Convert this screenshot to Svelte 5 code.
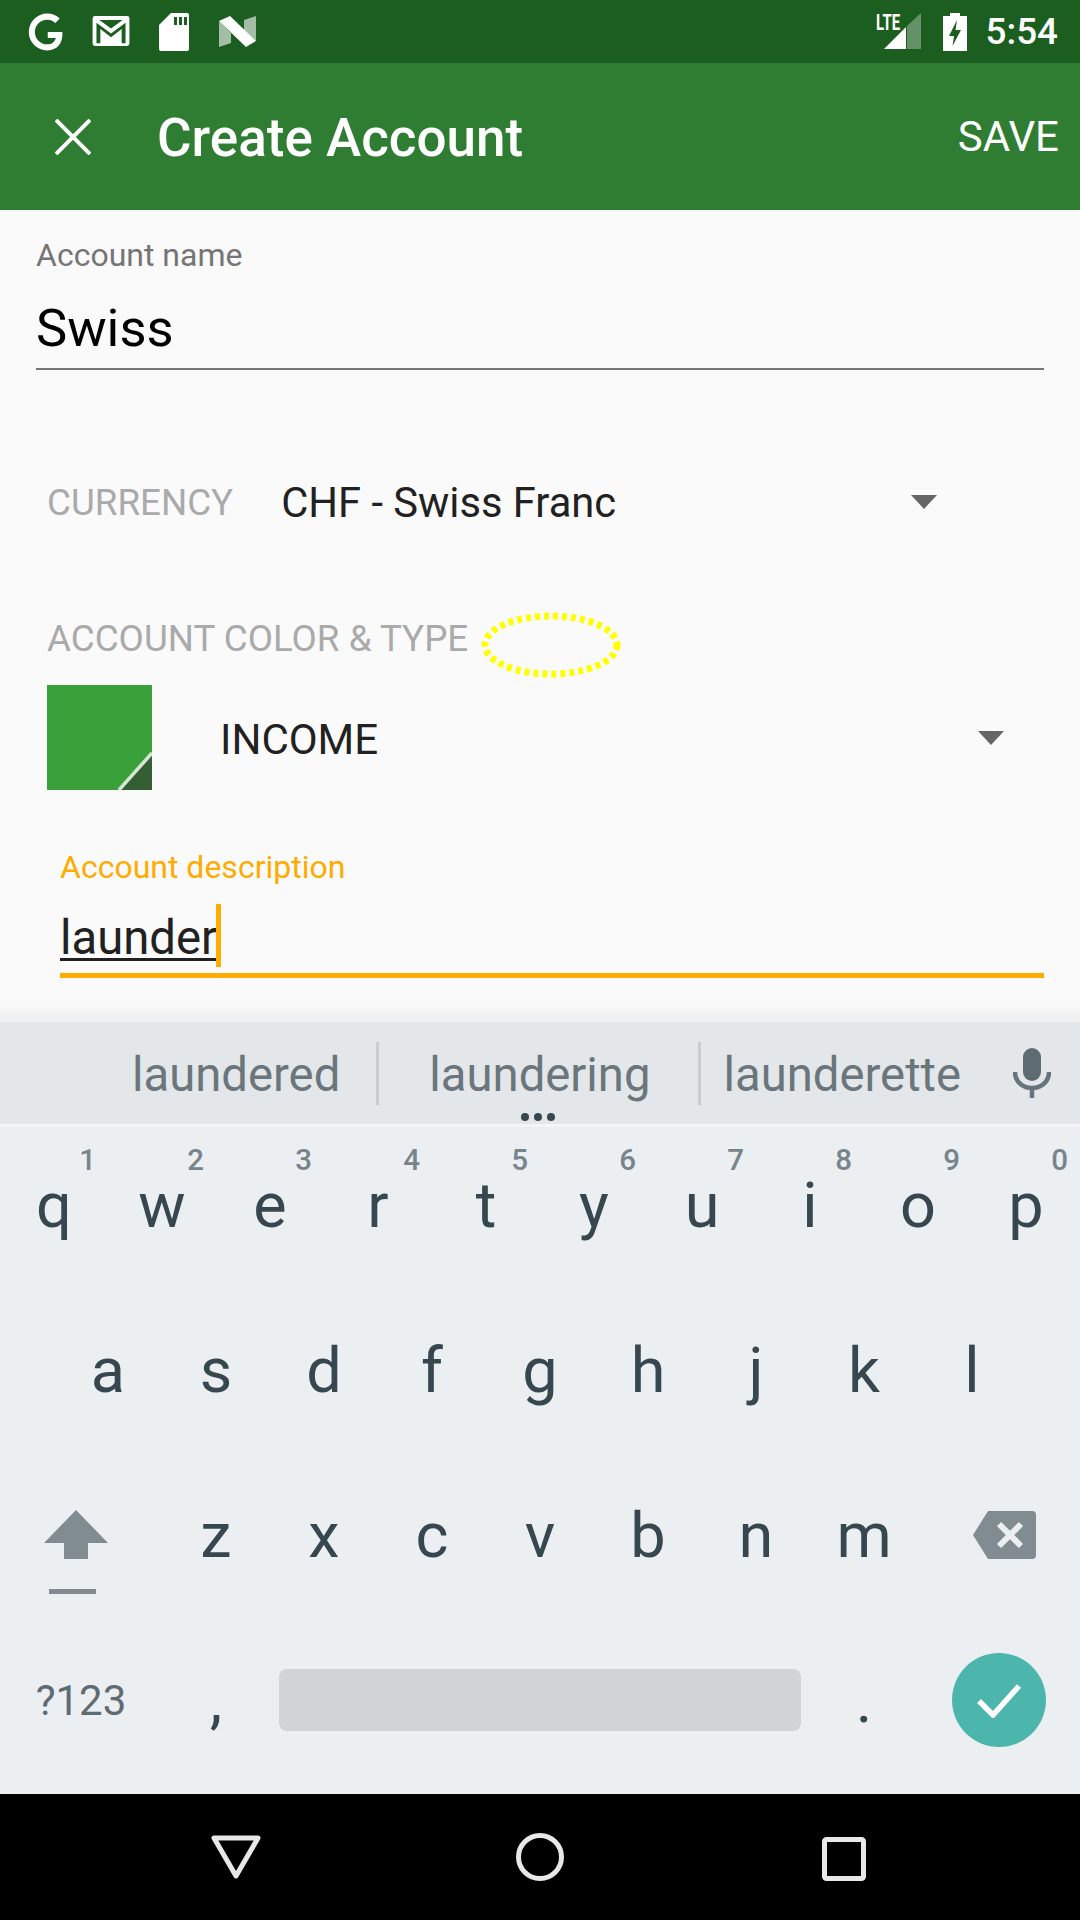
<script>
  const rows = [
    [['q','1'],['w','2'],['e','3'],['r','4'],['t','5'],['y','6'],['u','7'],['i','8'],['o','9'],['p','0']],
    [['a'],['s'],['d'],['f'],['g'],['h'],['j'],['k'],['l']]
  ];
  const row3 = ['z','x','c','v','b','n','m'];
</script>

<div class="screen">
  <header class="status">
    <div class="status-left">
      <svg class="ic-g" viewBox="0 0 40 40"><path d="M35.5 20H20.8v6.2h8.6c-1.2 4-4.6 6.800-9.200 6.800a13 13 0 0 1 0-26c3.400 0 6.400 1.300 8.600 3.400l4.600-4.600A19.400 19.400 0 0 0 20.200.6a19.400 19.400 0 1 0 0 38.800c10.800 0 16.800-7.800 16-19.400z" fill="#fff"/></svg>
      <svg class="ic-m" viewBox="0 0 38 32"><rect width="38" height="31" rx="2.500" fill="#fff"/><path d="M4 28V7l15 11L34 7v21h-4V13.500L19 22 8 13.500V28zM7 4h24L19 13z" fill="#1b5e20"/></svg>
      <svg class="ic-sd" viewBox="0 0 30 38"><path d="M12 0h16a2 2 0 0 1 2 2v34a2 2 0 0 1-2 2H2a2 2 0 0 1-2-2V12z" fill="#fff"/><path d="M15 4h3v8h-3zM20 4h3v8h-3zM25 4h3v8h-3z" fill="#1b5e20"/></svg>
      <svg class="ic-n" viewBox="0 0 37 32"><path d="M0 5v26l12-4V17z" fill="#fff" opacity=".6"/><path d="M25 4l12-4v25L25 15z" fill="#fff" opacity=".6"/><path d="M0 5 11 0l26 25-10 6z" fill="#fff"/></svg>
    </div>
    <div class="status-right">
      <div class="signal">
        <span class="lte">LTE</span>
        <svg viewBox="0 0 38 37"><path d="M0 36 22 14v22z" fill="#fff"/><path d="M23 13 37 0v36H23z" fill="#fff" opacity=".32"/></svg>
      </div>
      <svg class="ic-bat" viewBox="0 0 24 38"><path d="M7 0h10v3h7v35H0V3h7z" fill="#fff"/><path d="M14 7 6 23h5l-1.500 10L18 17h-5.500z" fill="#1b5e20"/></svg>
      <span class="time">5:54</span>
    </div>
  </header>

  <div class="appbar">
    <svg class="close" viewBox="0 0 36 36"><path d="M1 1l34 34M35 1 1 35" stroke="#fff" stroke-width="4" fill="none"/></svg>
    <h1>Create Account</h1>
    <span class="save">SAVE</span>
  </div>

  <main class="form">
    <div class="field first">
      <label for="n">Account name</label>
      <div class="value" id="n">Swiss</div>
    </div>

    <div class="currency">
      <span class="caption">CURRENCY</span>
      <span class="cur-val">CHF - Swiss Franc</span>
      <i class="caret"></i>
    </div>

    <div class="color-head">
      <span class="caption">ACCOUNT COLOR &amp; TYPE</span>
      <svg class="ellipse" viewBox="0 0 142 68"><ellipse cx="71" cy="34" rx="66" ry="29" fill="none" stroke="#ffff00" stroke-width="7" stroke-dasharray="5 4"/></svg>
    </div>

    <div class="type">
      <div class="swatch">
        <svg viewBox="0 0 105 105"><path d="M105 70v35H72z" fill="#365e34"/><path d="M105 68 72 105" stroke="#d5e7d3" stroke-width="3.500" fill="none"/></svg>
      </div>
      <span class="type-val">INCOME</span>
      <i class="caret"></i>
    </div>

    <div class="field desc">
      <label for="d">Account description</label>
      <div class="value" id="d"><span class="typed">launder</span><i class="cursor"></i></div>
    </div>
  </main>

  <div class="ime">
    <div class="suggest">
      <span class="s s1">laundered</span>
      <span class="sep sep1"></span>
      <span class="s s2">laundering</span>
      <span class="sep sep2"></span>
      <span class="s s3">launderette</span>
      <svg class="mic" viewBox="0 0 38 50"><rect x="10" y="0" width="18" height="33" rx="9" fill="#5f6b72"/><path d="M2 24c0 9 7 16 17 16s17-7 17-16M19 40v10" fill="none" stroke="#66737a" stroke-width="4.500"/></svg>
      <span class="dots"><b></b><b></b><b></b></span>
    </div>

    <div class="keys">
      {#each rows as row}
        <div class="row">
          {#each row as k}
            <span class="key">{k[0]}{#if k[1]}<sup class="hint">{k[1]}</sup>{/if}</span>
          {/each}
        </div>
      {/each}
      <div class="row start">
        <span class="fn">
          <svg class="shift" viewBox="0 0 64 84"><path d="M32 0l32 33H44v16H20V33H0z" fill="#808c8f"/><rect x="5" y="79" width="47" height="5" fill="#808c8f"/></svg>
        </span>
        {#each row3 as k}<span class="key">{k}</span>{/each}
        <span class="fn">
          <svg class="back" viewBox="0 0 63 48"><path d="M15 0h44a4 4 0 0 1 4 4v40a4 4 0 0 1-4 4H15L0 24z" fill="#808c8f"/><path d="M26 13l22 22M48 13 26 35" stroke="#ebeff2" stroke-width="6" fill="none"/></svg>
        </span>
      </div>
      <div class="row start bottom">
        <span class="sym">?123</span>
        <span class="comma">,</span>
        <span class="space"></span>
        <span class="dot">.</span>
        <span class="enter">
          <svg viewBox="0 0 46 36"><path d="M3 19l14 14L43 4" fill="none" stroke="#fff" stroke-width="5.500"/></svg>
        </span>
      </div>
    </div>
  </div>

  <nav class="navbar">
    <svg viewBox="0 0 50 44" class="nb"><path d="M3 3h44L25 41z" fill="none" stroke="#e8e8e8" stroke-width="5" stroke-linejoin="round"/></svg>
    <svg viewBox="0 0 50 50" class="nb c"><circle cx="25" cy="25" r="21.500" fill="none" stroke="#e8e8e8" stroke-width="5"/></svg>
    <svg viewBox="0 0 44 44" class="nb s"><rect x="2.500" y="2.500" width="39" height="39" rx="2" fill="none" stroke="#e8e8e8" stroke-width="5"/></svg>
  </nav>
</div>

<style>
  :global(body) { margin: 0; background: #000; }
  .screen {
    width: 1080px; height: 1920px; display: flex; flex-direction: column;
    font-family: Roboto, sans-serif; overflow: hidden; background: #fafafa;
  }
  .status {
    height: 63px; background: #1b5e20; display: flex; justify-content: space-between; align-items: center;
    padding: 0 22px 0 28px; box-sizing: border-box; flex: none;
  }
  .status-left, .status-right { display: flex; align-items: center; }
  .ic-g { width: 38px; height: 38px; }
  .ic-m { width: 38px; height: 31px; margin-left: 26px; }
  .ic-sd { width: 30px; height: 38px; margin-left: 29px; }
  .ic-n { width: 37px; height: 32px; margin-left: 30px; }
  .signal { position: relative; width: 46px; height: 38px; }
  .signal svg { position: absolute; right: 0; top: 0; width: 38px; height: 37px; }
  .lte {
    position: absolute; left: 0; top: -1px; font: 700 22px/22px Roboto, sans-serif; color: #fff;
    transform: scaleX(.68); transform-origin: left top;
  }
  .ic-bat { width: 24px; height: 38px; margin-left: 21px; }
  .time { font-size: 36.800px; font-weight: 500; color: #fff; margin-left: 19px; }
  .appbar {
    height: 147px; background: #2e7d32; display: flex; align-items: center; flex: none;
    padding: 0 21px 0 55px; box-sizing: border-box;
  }
  .close { width: 36px; height: 36px; }
  h1 { font-size: 53px; font-weight: 500; color: #fff; margin: 2px 0 0 66px; flex: 1; }
  .save { font-size: 42px; color: #fff; }
  .form { flex: 1; display: flex; flex-direction: column; min-height: 0; background: #fafafa; }
  .field label { display: block; font-size: 32px; color: #757575; line-height: 37px; }
  .field .value { font-size: 52.500px; color: #000; line-height: 62px; }
  .first { margin: 27px 36px 0; border-bottom: 2px solid #757575; padding-bottom: 9px; }
  .first .value { margin-top: 23px; }
  .currency { display: flex; align-items: center; margin: 107px 0 0 47px; padding-right: 143px; height: 50px; }
  .caption { font-size: 36.750px; color: #aaa; }
  .cur-val { font-size: 41.700px; color: #212121; margin-left: 48px; flex: 1; }
  .caret { width: 0; height: 0; border: 13px solid transparent; border-top: 14px solid #666; border-bottom: 0; }
  .color-head { display: flex; align-items: center; margin: 86px 0 0 47px; height: 50px; }
  .ellipse { width: 142px; height: 68px; margin: 14px 0 0 12px; }
  .type { display: flex; align-items: center; margin: 22px 0 0 47px; padding-right: 76px; }
  .swatch { width: 105px; height: 105px; background: #3aa03a; }
  .swatch svg { width: 100%; height: 100%; display: block; }
  .type-val { font-size: 42px; color: #212121; margin: 4px 0 0 68px; flex: 1; }
  .desc { margin: 59px 36px 0 60px; border-bottom: 5px solid #ffab00; padding-bottom: 6px; }
  .desc label { color: #ffab00; }
  .desc .value { color: #212121; display: flex; margin-top: 18px; font-size: 47.250px; height: 63px; }
  .typed { padding-top: 6px; height: 48px; line-height: 56px; border-bottom: 3px solid #212121; }
  .cursor { width: 5px; height: 63px; background: #ffab00; margin-left: -1px; }
  .ime { flex: none; height: 772px; background: #ebeff2; display: flex; flex-direction: column; border-top: 3px solid #f0f1f2; position: relative; }
  .ime::before { content: ""; position: absolute; left: 0; right: 0; top: -17px; height: 14px; background: linear-gradient(rgba(0,0,0,0), rgba(0,0,0,.05)); }
  .suggest {
    height: 102px; background: #e3e7ea; position: relative; display: flex; align-items: center; flex: none;
    border-bottom: 3px solid #f3f5f6; color: #6a767c; font-size: 47.250px;
  }
  .s { display: block; margin-top: 3px; }
  .s1 { margin-left: 132px; }
  .sep { width: 3px; height: 63px; background: #c8cdd0; }
  .sep1 { margin-left: 36px; }
  .sep2 { margin-left: 48px; }
  .s2 { margin-left: 50px; }
  .s3 { margin-left: 22px; }
  .mic { width: 38px; height: 50px; margin-left: 52px; }
  .dots { position: absolute; left: 521px; bottom: 3px; display: flex; gap: 5px; }
  .dots b { width: 8px; height: 8px; border-radius: 50%; background: #37474f; }
  .keys { flex: 1; display: flex; flex-direction: column; }
  .row { height: 165px; display: flex; justify-content: center; align-items: center; }
  .row.start { justify-content: flex-start; }
  .key { width: 108px; padding-bottom: 8px; text-align: center; font-size: 63px; color: #37474f; position: relative; line-height: 70px; display: block; }
  .hint { position: absolute; right: 12px; top: -26px; font-size: 29.500px; font-weight: 500; line-height: 30px; color: #78848b; }
  .fn { width: 162px; display: flex; justify-content: center; align-items: center; }
  .shift { width: 64px; height: 84px; margin: 25px 11px 0 0; }
  .back { width: 63px; height: 48px; margin: 0 0 10px 11px; }
  .bottom { padding-bottom: 9px; height: 156px; }
  .sym { width: 162px; text-align: center; font-size: 42px; color: #5f6b72; }
  .comma { width: 108px; text-align: center; font-size: 63px; color: #37474f; }
  .space { width: 522px; height: 62px; background: #d0d4d7; border-radius: 8px; margin-left: 9px; }
  .dot { width: 108px; margin-left: 9px; text-align: center; font-size: 63px; color: #37474f; }
  .enter { width: 94px; height: 94px; margin-left: 34px; border-radius: 50%; background: #4db6ac; display: flex; align-items: center; justify-content: center; }
  .enter svg { width: 46px; height: 36px; }
  .navbar { height: 126px; background: #000; flex: none; display: flex; align-items: center; position: relative; }
  .nb { width: 50px; height: 44px; margin-left: 211px; }
  .nb.c { width: 50px; height: 50px; margin-left: 254px; }
  .nb.s { width: 44px; height: 44px; margin-left: 257px; }
</style>
